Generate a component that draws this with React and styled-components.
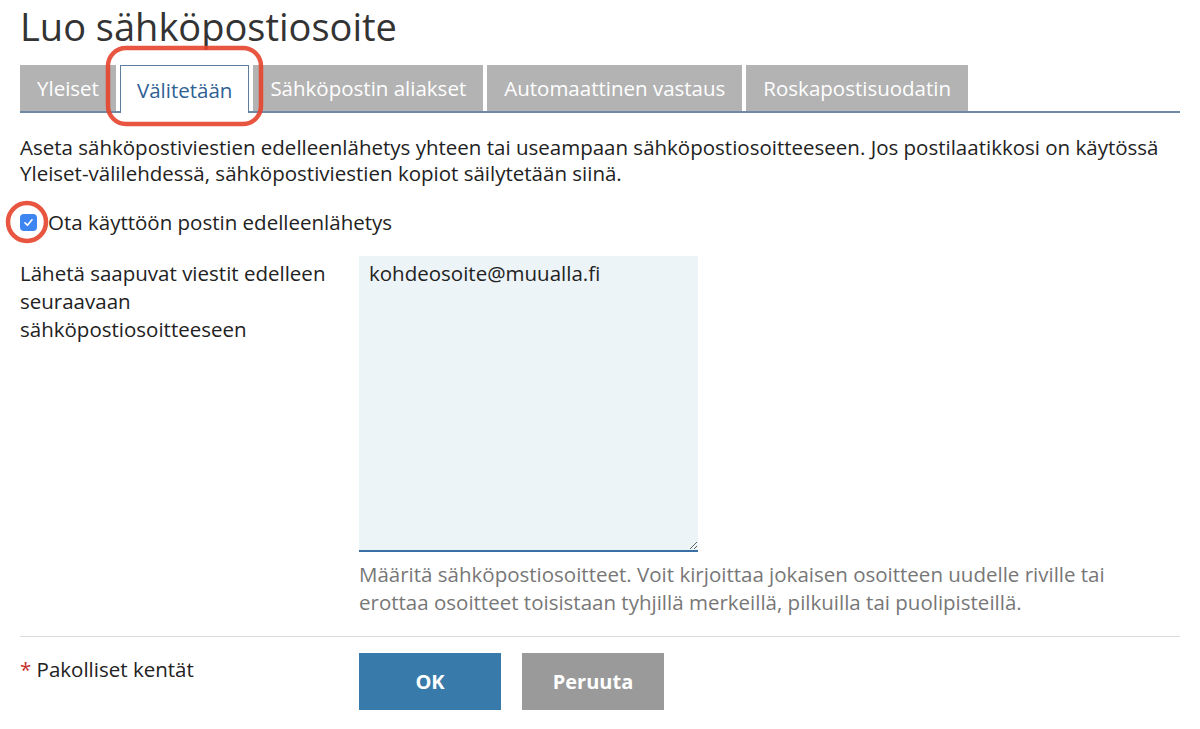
import React from "react"
import styled, { createGlobalStyle } from "styled-components"

const GlobalStyle = createGlobalStyle`
  html, body {
    margin: 0;
    padding: 0;
    background: #fff;
  }
  body {
    font-family: "Open Sans", "Noto Sans", sans-serif;
    color: #222;
  }
`

const tabs = [
  "Yleiset",
  "Välitetään",
  "Sähköpostin aliakset",
  "Automaattinen vastaus",
  "Roskapostisuodatin",
]

const Page = styled.div`
  position: relative;
  width: 1160px;
  padding: 0 20px;
`

const Title = styled.h1`
  margin: 0;
  font-size: 38px;
  font-weight: 400;
  line-height: 52px;
  color: #333;
`

const TabBar = styled.div`
  display: flex;
  gap: 4px;
  margin-top: 13px;
  border-bottom: 2px solid #6c8aa8;
`

const Tab = styled.div`
  display: flex;
  align-items: center;
  padding: 0 ${p => (p.$active ? "16px" : "17px")};
  font-size: 20.5px;
  white-space: nowrap;
  color: ${p => (p.$active ? "#2f6194" : "#fff")};
  background: ${p => (p.$active ? "#fff" : "#b3b3b3")};
  border: ${p => (p.$active ? "1px solid #5f7d9c" : "none")};
  border-bottom: none;
  margin-bottom: ${p => (p.$active ? "-2px" : "0")};
  height: ${p => (p.$active ? "48px" : "46px")};
  box-sizing: border-box;
`

const Intro = styled.p`
  margin: 21px 0 0;
  font-size: 20.5px;
  line-height: 26px;
`

const CheckRow = styled.label`
  display: flex;
  align-items: center;
  gap: 11px;
  margin-top: 23px;
  font-size: 20.5px;
  line-height: 26px;
`

const Box = styled.span`
  width: 17px;
  height: 17px;
  border-radius: 4px;
  background: #3d86f1;
  display: flex;
  align-items: center;
  justify-content: center;
  flex-shrink: 0;
`

const FieldRow = styled.div`
  display: grid;
  grid-template-columns: 339px 339px;
  margin-top: 21px;
`

const FieldLabel = styled.div`
  font-size: 20.5px;
  line-height: 28px;
  padding-top: 3px;
  width: 325px;
`

const Area = styled.textarea`
  width: 339px;
  height: 296px;
  box-sizing: border-box;
  margin: 0;
  padding: 3px 10px;
  border: none;
  border-bottom: 2px solid #3b6ea3;
  background: #edf4f8;
  font-family: "Open Sans", sans-serif;
  font-size: 20.5px;
  line-height: 28px;
  color: #222;
  resize: both;
  outline: none;
  display: block;
`

const Hint = styled.p`
  grid-column: 2 / span 1;
  width: 800px;
  margin: 8px 0 0;
  font-size: 20.5px;
  line-height: 28px;
  color: #777;
`

const Divider = styled.hr`
  margin: 20px 0 0;
  border: none;
  border-top: 1px solid #dcdcdc;
`

const Footer = styled.div`
  display: grid;
  grid-template-columns: 339px auto;
  margin-top: 16px;
`

const Required = styled.div`
  font-size: 20.5px;
  line-height: 28px;
  padding-top: 2px;
  span {
    color: #c8302a;
  }
`

const Buttons = styled.div`
  display: flex;
  gap: 21px;
`

const Button = styled.button`
  width: 142px;
  height: 57px;
  border: none;
  font-family: "Open Sans", sans-serif;
  font-weight: 700;
  font-size: 20px;
  color: #fff;
  background: ${p => (p.$primary ? "#387bab" : "#9a9a9a")};
`

const Mark = styled.svg`
  position: absolute;
  left: 0;
  top: 0;
  pointer-events: none;
`

export default function App() {
  return (
    <Page>
      <GlobalStyle />
      <Title>Luo sähköpostiosoite</Title>
      <TabBar>
        {tabs.map((t, i) => (
          <Tab key={t} $active={i === 1}>
            {t}
          </Tab>
        ))}
      </TabBar>
      <Intro>
        Aseta sähköpostiviestien edelleenlähetys yhteen tai useampaan
        sähköpostiosoitteeseen. Jos postilaatikkosi on käytössä
        Yleiset-välilehdessä, sähköpostiviestien kopiot säilytetään siinä.
      </Intro>
      <CheckRow>
        <Box>
          <svg width="11" height="11" viewBox="0 0 12 12">
            <path d="M2.2 6.4 L4.9 9 L9.8 3" fill="none" stroke="#fff" strokeWidth="1.8" strokeLinecap="round" strokeLinejoin="round" />
          </svg>
        </Box>
        Ota käyttöön postin edelleenlähetys
      </CheckRow>
      <FieldRow>
        <FieldLabel>Lähetä saapuvat viestit edelleen seuraavaan sähköpostiosoitteeseen</FieldLabel>
        <Area defaultValue="kohdeosoite@muualla.fi" />
        <Hint>
          Määritä sähköpostiosoitteet. Voit kirjoittaa jokaisen osoitteen uudelle riville tai
          erottaa osoitteet toisistaan tyhjillä merkeillä, pilkuilla tai puolipisteillä.
        </Hint>
      </FieldRow>
      <Divider />
      <Footer>
        <Required>
          <span>*</span> Pakolliset kentät
        </Required>
        <Buttons>
          <Button $primary>OK</Button>
          <Button>Peruuta</Button>
        </Buttons>
      </Footer>
      <Mark width="1200" height="729">
        <rect x="108" y="48" width="153" height="76" rx="18" fill="none" stroke="#e5432b" strokeWidth="4.5" opacity="0.9" />
        <circle cx="27" cy="222" r="19" fill="none" stroke="#e5432b" strokeWidth="4.5" opacity="0.9" />
      </Mark>
    </Page>
  )
}
